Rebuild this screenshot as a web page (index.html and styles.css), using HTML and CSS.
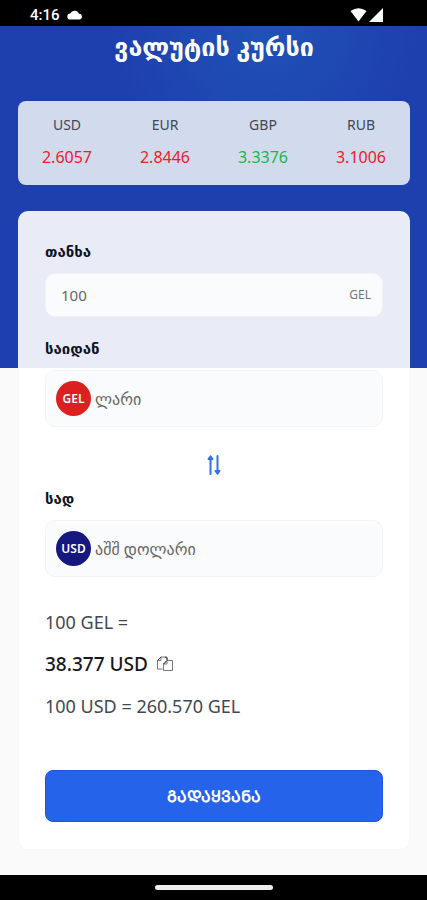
FILE: index.html
```html
<!DOCTYPE html>
<html lang="ka">
<head>
<meta charset="utf-8">
<meta name="viewport" content="width=device-width, initial-scale=1">
<title>ვალუტის კურსი</title>
<link rel="stylesheet" href="styles.css">
</head>
<body>
<header class="status">
  <span class="status-group">
    <span>4:16</span>
    <svg width="16" height="10" viewBox="0 0 16 10" fill="#fff" aria-hidden="true"><path d="M3.500 9.500a3 3 0 0 1-.3-6A4.800 4.800 0 0 1 12 3.800 2.900 2.900 0 0 1 12.800 9.500z"/></svg>
  </span>
  <span class="status-icons">
    <svg width="17" height="14" viewBox="0 0 17 14" fill="#fff" aria-hidden="true"><path d="M0.500 3Q8.500-2.500 16.500 3L8.500 13.500z"/></svg>
    <svg width="14" height="14" viewBox="0 0 14 14" fill="#fff" aria-hidden="true"><path d="M14 0v14H0z"/></svg>
  </span>
</header>
<main class="page">
  <h1 class="title">ვალუტის კურსი</h1>
  <dl class="rates">
    <div class="rate"><dt>USD</dt><dd>2.6057</dd></div>
    <div class="rate"><dt>EUR</dt><dd>2.8446</dd></div>
    <div class="rate"><dt>GBP</dt><dd class="up">3.3376</dd></div>
    <div class="rate"><dt>RUB</dt><dd>3.1006</dd></div>
  </dl>
  <form class="converter">
    <label class="label" for="amount">თანხა</label>
    <div class="field">
      <input class="control amount" id="amount" type="text" inputmode="decimal" value="100">
      <span class="unit">GEL</span>
    </div>
    <label class="label" for="from">საიდან</label>
    <div class="field picker">
      <span class="coin">GEL</span>
      <select class="control" id="from"><option>ლარი</option></select>
    </div>
    <button class="icon-button swap" type="button" aria-label="შეცვლა">
      <svg width="16" height="22" viewBox="0 0 16 22" fill="none" stroke="#2f74e6" stroke-width="2" stroke-linecap="round" stroke-linejoin="round" aria-hidden="true"><path d="M4.500 20V2.500M11.500 2v17.500"/><path fill="#2f74e6" d="M2.500 5l2-2.500 2 2.500zM9.500 17l2 2.500 2-2.500z"/></svg>
    </button>
    <label class="label" for="to">სად</label>
    <div class="field picker">
      <span class="coin coin-usd">USD</span>
      <select class="control" id="to"><option>აშშ დოლარი</option></select>
    </div>
    <div class="result">
      <p>100 GEL =</p>
      <p class="total"><output for="amount from to">38.377 USD</output>
        <button class="icon-button" type="button" aria-label="კოპირება">
          <svg width="18" height="18" viewBox="0 0 18 18" fill="none" stroke="#777" stroke-linejoin="round" aria-hidden="true"><path d="M6.500 14h-5V5.500L5 2h6v3M1.500 5.500H5V2"/><path d="M11 5.500h5.500v10h-9V9zM7.500 9H11V5.500"/><path stroke="#333" d="M1.500 5.500 5 2M9 2l2 1v2M7.500 9 11 5.500"/></svg>
        </button>
      </p>
      <p>100 USD = 260.570 GEL</p>
    </div>
    <button class="submit" type="submit">ᲒᲐᲓᲐᲧᲕᲐᲜᲐ</button>
  </form>
</main>
<footer class="navbar"><span class="handle"></span></footer>
</body>
</html>
```
FILE: styles.css
```css
* { box-sizing: border-box; }
body {
  margin: 0;
  min-height: 100vh;
  display: flex;
  flex-direction: column;
  background: #fafafa;
  color: #414854;
  font: 16px/24px "Noto Sans", "DejaVu Sans", sans-serif;
}
h1, p, dl, dd { margin: 0; }
button, input, select { font: inherit; color: inherit; }
svg { display: block; }

.status {
  height: 26px;
  padding: 4px 44px 0 30px;
  display: flex;
  justify-content: space-between;
  align-items: center;
  background: #000;
  color: #fff;
  font: 500 15px/20px Roboto, sans-serif;
}
.status-group { display: flex; align-items: center; gap: 7px; }
.status-icons { display: flex; gap: 2px; }

.page {
  flex: 1;
  padding: 4px 17px 25px 18px;
  background:
    radial-gradient(circle at 62% 0, #1f52b6 0, #1e40af00 150px) 0 0 / 100% 342px no-repeat,
    linear-gradient(#1e40af, #1e40af) 0 0 / 100% 342px no-repeat;
}
.title {
  margin-bottom: 39px;
  color: #fff;
  font-size: 25px;
  font-weight: 600;
  line-height: 32px;
  text-align: center;
}

.rates {
  margin-bottom: 26px;
  padding: 12px 0 16px;
  display: grid;
  grid-template-columns: repeat(4, 1fr);
  border-radius: 8px;
  background: #d2daee;
  text-align: center;
}
.rate { display: grid; gap: 8px; }
.rate dt { font-size: 14px; }
.rate dd { color: #ee2028; }
.rate .up { color: #16b94a; }

.converter {
  padding: 27px 26px;
  display: flex;
  flex-direction: column;
  border: 1px solid #f3f4f699;
  border-radius: 10px;
  background: #ffffffe6;
}
.label {
  margin-bottom: 10px;
  color: #10131f;
  font-size: 15px;
  font-weight: 600;
}
.field {
  margin-bottom: 19px;
  padding: 9px 11px 9px 15px;
  display: flex;
  align-items: center;
  border: 1px solid #f1f4f5;
  border-radius: 10px;
  background: #fafbfd;
}
.control {
  flex: 1;
  min-width: 0;
  padding: 0;
  border: 0;
  outline: 0;
  appearance: none;
  background: none;
  color: #666;
}
.amount { font-size: 15px; }
.unit { color: #777; font-size: 12px; }
.picker { padding: 10px; gap: 4px; }
.coin {
  width: 35px;
  height: 35px;
  border-radius: 50%;
  background: #dc2020;
  color: #fff;
  font-size: 12px;
  font-weight: 600;
  line-height: 35px;
  text-align: center;
}
.coin-usd { background: #171780; }

.icon-button { padding: 0; border: 0; background: none; cursor: pointer; }
.swap { margin: 8px auto 10px; }

.result {
  margin: 12px 0 50px;
  display: grid;
  gap: 14px;
  font-size: 18px;
  line-height: 28px;
}
.total {
  display: flex;
  align-items: center;
  gap: 8px;
  color: #16181d;
  font-size: 19px;
  font-weight: 500;
}
.submit {
  height: 52px;
  border: 1px solid #1d55dd;
  border-radius: 8px;
  background: #2563eb;
  color: #fff;
  font-size: 16px;
  font-weight: 600;
}

.navbar {
  height: 25px;
  display: grid;
  place-items: center;
  background: #000;
}
.handle { width: 118px; height: 5px; border-radius: 3px; background: #eee; }
```
